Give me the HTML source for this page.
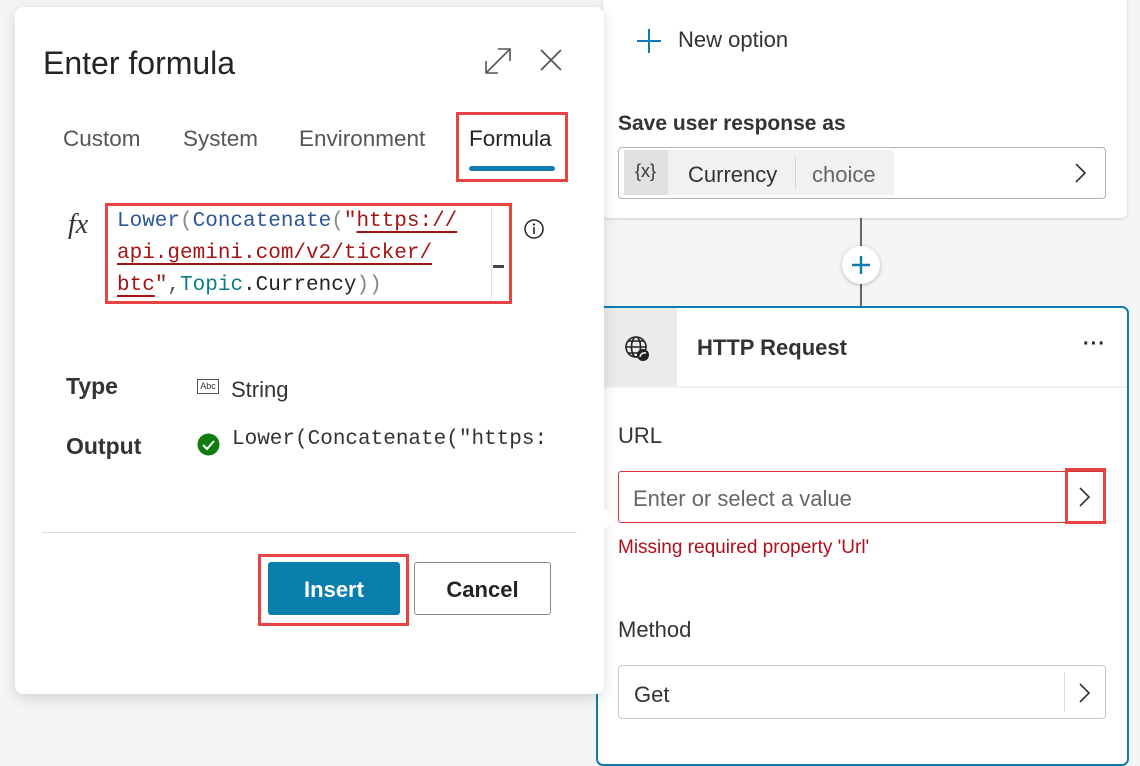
<!DOCTYPE html>
<html><head><style>
*{box-sizing:border-box;margin:0;padding:0}
body{width:1140px;height:747px;overflow:hidden;background:#f4f5f7;font-family:"Liberation Sans",sans-serif;color:#242424;position:relative}
.a{position:absolute;white-space:nowrap}
.mono{font-family:"Liberation Mono",monospace;font-size:21px}
.red{border:3px solid #e84343}
</style></head><body>
<div class="a" style="left:603px;top:-10px;width:524px;height:228px;background:#fff;border-radius:6px;box-shadow:0 1px 3px rgba(0,0,0,.15)"></div>
<svg class="a" style="left:636px;top:28px" width="26" height="26"><path d="M13 1V25M1 13H25" stroke="#0f7bb0" stroke-width="2"/></svg>
<div class="a" style="left:678px;top:27px;font-size:22px;color:#333">New option</div>
<div class="a" style="left:618px;top:112px;font-size:21px;font-weight:bold;color:#333">Save user response as</div>
<div class="a" style="left:618px;top:147px;width:488px;height:52px;border:1px solid #b3b3b3;border-radius:4px;background:#fff"></div>
<div class="a" style="left:624px;top:150px;width:270px;height:45px;background:#f1f1f1;border-radius:3px"></div>
<div class="a" style="left:624px;top:150px;width:44px;height:45px;background:#e1e1e1"></div>
<div class="a" style="left:635px;top:161px;font-size:18px;color:#333">{x}</div>
<div class="a" style="left:688px;top:162px;font-size:22px;color:#333">Currency</div>
<div class="a" style="left:795px;top:156px;width:1px;height:34px;background:#d6d6d6"></div>
<div class="a" style="left:812px;top:162px;font-size:22px;color:#666">choice</div>
<svg class="a" style="left:1073px;top:162px" width="16" height="22"><path d="M3 2L12 11L3 20" stroke="#333" stroke-width="1.6" fill="none"/></svg>
<div class="a" style="left:860px;top:218px;width:2px;height:90px;background:#666"></div>
<div class="a" style="left:842px;top:246px;width:38px;height:38px;border-radius:50%;background:#fff;box-shadow:0 1px 4px rgba(0,0,0,.25)"></div>
<svg class="a" style="left:850px;top:254px" width="22" height="22"><path d="M11 2V20M2 11H20" stroke="#0f7bb0" stroke-width="2.4"/></svg>
<div class="a" style="left:596px;top:306px;width:533px;height:460px;background:#fff;border:2px solid #0f7bb0;border-radius:7px"></div>
<div class="a" style="left:598px;top:308px;width:79px;height:79px;background:#ebebeb"></div>
<div class="a" style="left:598px;top:386px;width:529px;height:2px;background:#f0f0f0"></div>
<svg class="a" style="left:624px;top:335px" width="28" height="28" viewBox="0 0 28 28"><g fill="none" stroke="#222" stroke-width="1.6"><circle cx="12" cy="12" r="10"/><ellipse cx="12" cy="12" rx="4.5" ry="10"/><path d="M2 12H22M4 6H20M4 18H14"/></g><circle cx="19" cy="20" r="6" fill="#222"/><path d="M16 22Q17 17 22 18" stroke="#fff" stroke-width="1.5" fill="none"/></svg>
<div class="a" style="left:697px;top:335px;font-size:22px;font-weight:bold;color:#333">HTTP Request</div>
<div class="a" style="left:1083px;top:333px;font-size:20px;font-weight:bold;letter-spacing:1px">···</div>
<div class="a" style="left:618px;top:423px;font-size:22px;color:#333">URL</div>
<div class="a" style="left:618px;top:471px;width:488px;height:52px;border:1px solid #d13438;border-radius:3px;background:#fff"></div>
<div class="a" style="left:633px;top:486px;font-size:22px;color:#666">Enter or select a value</div>
<div class="a red" style="left:1065px;top:468px;width:41px;height:56px"></div>
<svg class="a" style="left:1077px;top:486px" width="16" height="22"><path d="M3 2L12 11L3 20" stroke="#333" stroke-width="1.6" fill="none"/></svg>
<div class="a" style="left:618px;top:537px;font-size:19px;color:#b10e1c">Missing required property 'Url'</div>
<div class="a" style="left:618px;top:617px;font-size:22px;color:#333">Method</div>
<div class="a" style="left:618px;top:665px;width:488px;height:54px;border:1px solid #c8c8c8;border-radius:4px;background:#fff"></div>
<div class="a" style="left:1064px;top:672px;width:1px;height:40px;background:#ddd"></div>
<div class="a" style="left:634px;top:682px;font-size:22px;color:#333">Get</div>
<svg class="a" style="left:1077px;top:682px" width="16" height="22"><path d="M3 2L12 11L3 20" stroke="#333" stroke-width="1.6" fill="none"/></svg>
<div class="a" style="left:15px;top:7px;width:589px;height:687px;background:#fff;border-radius:8px;box-shadow:0 4px 14px rgba(0,0,0,.14)"></div>
<div class="a" style="left:598px;top:512px;width:14px;height:14px;background:#fff;transform:rotate(45deg)"></div>
<div class="a" style="left:43px;top:45px;font-size:32px;color:#242424">Enter formula</div>
<svg class="a" style="left:483px;top:46px" width="30" height="30"><path d="M3 27L27 3M15 3H27V15M3 15V27H15" stroke="#555" stroke-width="1.6" fill="none"/></svg>
<svg class="a" style="left:539px;top:48px" width="24" height="24"><path d="M2 2L22 22M22 2L2 22" stroke="#555" stroke-width="1.8"/></svg>
<div class="a" style="left:63px;top:126px;font-size:22.5px;color:#555">Custom</div>
<div class="a" style="left:183px;top:126px;font-size:22.5px;color:#555">System</div>
<div class="a" style="left:299px;top:126px;font-size:22.5px;color:#555">Environment</div>
<div class="a" style="left:469px;top:126px;font-size:22.5px;color:#242424">Formula</div>
<div class="a" style="left:469px;top:166px;width:86px;height:5px;border-radius:3px;background:#0f7bb0"></div>
<div class="a red" style="left:456px;top:112px;width:112px;height:70px"></div>
<div class="a" style="left:68px;top:209px;font-family:'Liberation Serif',serif;font-style:italic;font-size:28px;color:#333">fx</div>
<div class="a red" style="left:105px;top:203px;width:407px;height:101px"></div>
<div class="a" style="left:491px;top:208px;width:1px;height:91px;background:#ddd"></div>
<div class="a" style="left:493px;top:265px;width:11px;height:3px;background:#444"></div>
<div class="a mono" style="left:117px;top:206px;line-height:32px">
<div><span style="color:#2b5797">Lower</span><span style="color:#888">(</span><span style="color:#2b5797">Concatenate</span><span style="color:#888">(</span><span style="color:#a31515">"<u style="text-underline-offset:5px">https://</u></span></div>
<div style="color:#a31515"><u style="text-underline-offset:5px">api.gemini.com/v2/ticker/</u></div>
<div><span style="color:#a31515"><u style="text-underline-offset:5px">btc</u>"</span><span style="color:#555">,</span><span style="color:#0e7c86">Topic</span>.Currency<span style="color:#888">))</span></div>
</div>
<svg class="a" style="left:523px;top:218px" width="22" height="22"><circle cx="11" cy="11" r="9" fill="none" stroke="#222" stroke-width="1.5"/><path d="M11 9V16" stroke="#222" stroke-width="1.6"/><circle cx="11" cy="6.5" r="1.1" fill="#222"/></svg>
<div class="a" style="left:66px;top:373px;font-size:23px;font-weight:bold;color:#333">Type</div>
<div class="a" style="left:197px;top:379px;width:22px;height:15px;border:1px solid #555;font-size:9px;line-height:13px;text-align:center;color:#333">Abc</div>
<div class="a" style="left:231px;top:377px;font-size:22px;color:#333">String</div>
<div class="a" style="left:66px;top:433px;font-size:23px;font-weight:bold;color:#333">Output</div>
<svg class="a" style="left:197px;top:433px" width="23" height="23"><circle cx="11.5" cy="11.5" r="11" fill="#107c10"/><path d="M6 12L10 16L17 8" stroke="#fff" stroke-width="2" fill="none"/></svg>
<div class="a mono" style="left:232px;top:428px;color:#333">Lower(Concatenate("https:</div>
<div class="a" style="left:42px;top:532px;width:535px;height:1px;background:#ddd"></div>
<div class="a red" style="left:258px;top:554px;width:151px;height:72px"></div>
<div class="a" style="left:268px;top:562px;width:132px;height:53px;background:#0a7fad;border-radius:3px;color:#fff;font-size:22px;font-weight:bold;text-align:center;line-height:55px">Insert</div>
<div class="a" style="left:414px;top:562px;width:137px;height:53px;background:#fff;border:1px solid #8a8a8a;border-radius:3px;color:#242424;font-size:22px;font-weight:bold;text-align:center;line-height:53px">Cancel</div>
</body></html>
